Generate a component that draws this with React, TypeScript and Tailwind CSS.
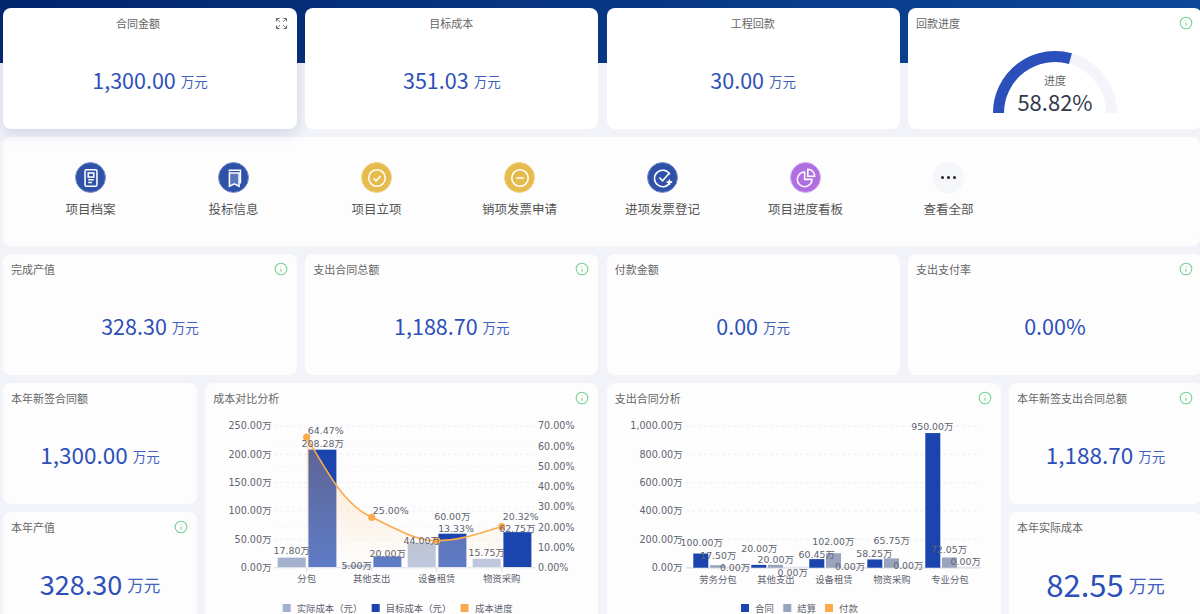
import React from "react";
import { Info } from "lucide-react";

const chartFont = "'DejaVu Sans','Noto Sans CJK SC',sans-serif";

function InfoIcon() {
  return <Info size={14} strokeWidth={1.8} className="text-[#74d091]" />;
}

function FullIcon() {
  return (
    <svg width="11" height="11" viewBox="0 0 11 11" fill="none" stroke="#666" strokeWidth="1">
      <path d="M0.5 3.5V0.5H3.5M7.5 0.5H10.5V3.5M10.5 7.5V10.5H7.5M3.5 10.5H0.5V7.5" />
      <path d="M1 1L4 4M10 1L7 4M10 10L7 7M1 10L4 7" strokeWidth="0.8" />
    </svg>
  );
}

interface StatProps {
  title: string;
  value: string;
  unit?: string;
  info?: boolean;
  center?: boolean;
  numClass?: string;
  unitClass?: string;
  extra?: React.ReactNode;
  titleClass?: string;
  white?: boolean;
  className?: string;
}

function StatCard({
  title,
  value,
  unit = "万元",
  info,
  center,
  numClass = "text-[21.5px]",
  unitClass = "text-[13.5px]",
  extra,
  titleClass = "",
  white,
  className = "",
}: StatProps) {
  return (
    <div className={`rounded-[8px] h-[121px] ${white ? "bg-white" : "bg-[#fdfdfe]"} ${className}`}>
      <div className={`h-[30px] pl-[8px] pr-[9px] flex items-center text-[11px] text-[#666] ${center ? "justify-center relative" : "justify-between"}`}>
        <span className={titleClass}>{title}</span>
        {info && <InfoIcon />}
        {extra}
      </div>
      <div className="h-[84px] flex items-center justify-center text-[#2d4fb8]">
        <span className={numClass}>{value}</span>
        {unit && <span className={`${unitClass} ml-[5px] mt-[3px] text-[#4262bd]`}>{unit}</span>}
      </div>
    </div>
  );
}

function Gauge() {
  const cx = 65;
  const cy = 75;
  const r = 56.5;
  const a = Math.PI * (1 - 0.5882);
  const ex = cx + r * Math.cos(a);
  const ey = cy - r * Math.sin(a);
  return (
    <div className="rounded-[8px] h-[121px] bg-white">
      <div className="h-[30px] pl-[8px] pr-[9px] flex items-center justify-between text-[11px] text-[#666]">
        <span>回款进度</span>
        <InfoIcon />
      </div>
      <svg width="130" height="84" viewBox="0 0 130 84" className="mx-auto">
        <path d={`M${cx - r} ${cy}A${r} ${r} 0 0 1 ${cx + r} ${cy}`} fill="none" stroke="#f3f5fb" strokeWidth="11" />
        <path d={`M${cx - r} ${cy}A${r} ${r} 0 0 1 ${ex} ${ey}`} fill="none" stroke="#2b50bc" strokeWidth="11" />
        <text x={cx} y="47" textAnchor="middle" fontSize="11" fill="#666">进度</text>
        <text x={cx} y="73" textAnchor="middle" fontSize="22" fill="#333a4d">58.82%</text>
      </svg>
    </div>
  );
}

const shortcuts = [
  {
    label: "项目档案",
    bg: "bg-[#2f52a8] border-[#7f94c9]",
    icon: (
      <>
        <rect x="5.5" y="3" width="13" height="18" rx="1.5" />
        <rect x="9" y="6.5" width="6" height="4.5" />
        <path d="M9 14h6M9 17h4" />
      </>
    ),
  },
  {
    label: "投标信息",
    bg: "bg-[#2f52a8] border-[#7f94c9]",
    icon: (
      <>
        <path d="M7 20V6.5h10.5V21l-5.2-2.7L7 21z" fill="#5a77bd" />
        <path d="M7 5V3.5h12V18" />
      </>
    ),
  },
  {
    label: "项目立项",
    bg: "bg-[#e6bb4d] border-[#f0d48c]",
    icon: (
      <>
        <circle cx="12" cy="12" r="9" />
        <path d="M8 12.3l3 2.8 5-5.3" />
      </>
    ),
  },
  {
    label: "销项发票申请",
    bg: "bg-[#e6bb4d] border-[#f0d48c]",
    icon: (
      <>
        <circle cx="12" cy="12" r="9" />
        <path d="M8 12h8" />
      </>
    ),
  },
  {
    label: "进项发票登记",
    bg: "bg-[#2f52a8] border-[#7f94c9]",
    icon: (
      <>
        <path d="M19.5 8A9 9 0 1 0 20 16" />
        <path d="M8 11.5l3.5 3.5L19 6.5M16 16.5h6M19 13.5v6" />
      </>
    ),
  },
  {
    label: "项目进度看板",
    bg: "bg-[#b06fe0] border-[#d2aaf0]",
    icon: (
      <>
        <path d="M10.5 5.5a8 8 0 1 0 8 8h-8z" />
        <path d="M14 2.5a7.5 7.5 0 0 1 7.5 7.5H14z" />
      </>
    ),
  },
];

function Shortcut({ label, bg, children }: { label: string; bg: string; children: React.ReactNode }) {
  return (
    <div className="w-[143px] flex flex-col items-center">
      <div className={`w-[31px] h-[31px] rounded-full border flex items-center justify-center ${bg}`}>
        <svg width="22" height="22" viewBox="0 0 24 24" fill="none" stroke="#fff" strokeWidth="1.7">
          {children}
        </svg>
      </div>
      <div className="mt-[7px] text-[12.5px] leading-[18px] text-[#555]">{label}</div>
    </div>
  );
}

function Label({ x, y, text, anchor = "middle", size = 9.4 }: { x: number; y: number; text: string; anchor?: "middle" | "start" | "end"; size?: number }) {
  return (
    <text x={x} y={y + 3.4} textAnchor={anchor} fontSize={size} fill="#5f636e" fontFamily={chartFont}>
      {text}
    </text>
  );
}

function Legend({ items }: { items: { x: number; tx: number; c: string; t: string }[] }) {
  return (
    <>
      {items.map((l) => (
        <g key={l.t}>
          <rect x={l.x} y="604" width="8" height="8" fill={l.c} />
          <text x={l.tx} y="611.5" fontSize="9.4" fill="#5f636e" fontFamily={chartFont}>{l.t}</text>
        </g>
      ))}
    </>
  );
}

function CostChart() {
  const base = 567.7;
  const h = (v: number) => (v / 250) * 141.7;
  const leftAxis = ["250.00万", "200.00万", "150.00万", "100.00万", "50.00万", "0.00万"];
  const rightAxis = ["70.00%", "60.00%", "50.00%", "40.00%", "30.00%", "20.00%", "10.00%", "0.00%"];
  const cats = [
    { c: 306.7, n: "分包", a: 17.8, t: 208.28 },
    { c: 371.7, n: "其他支出", a: 5, t: 20 },
    { c: 436.7, n: "设备租赁", a: 44, t: 60 },
    { c: 501.7, n: "物资采购", a: 15.75, t: 62.75 },
  ];
  const curve = "M306.7 437.2C330 477 345 505 371.7 517.3C395 528 415 540.7 436.7 540.7C460 540.7 480 533 501.7 526.6";
  const labels: [number, number, string][] = [
    [325.7, 430.7, "64.47%"],
    [322.7, 444, "208.28万"],
    [291.7, 550.7, "17.80万"],
    [356.7, 566, "5.00万"],
    [387.7, 553.3, "20.00万"],
    [390.7, 510.3, "25.00%"],
    [421.7, 540.7, "44.00万"],
    [452.3, 516.7, "60.00万"],
    [456, 528.7, "13.33%"],
    [486.7, 552.7, "15.75万"],
    [517.3, 529, "62.75万"],
    [520.7, 517, "20.32%"],
  ];
  return (
    <svg width="393" height="204" viewBox="205 410 393 204">
      <defs>
        <linearGradient id="costArea" x1="0" y1="0" x2="0" y2="1">
          <stop offset="0" stopColor="#f9a94a" stopOpacity="0.3" />
          <stop offset="1" stopColor="#ffffff" stopOpacity="0.3" />
        </linearGradient>
      </defs>
      {[426, 454.3, 482.7, 511, 539.3].map((y) => (
        <line key={y} x1="274" x2="535" y1={y} y2={y} stroke="#eceef3" strokeWidth="1" strokeDasharray="3 3" />
      ))}
      {[446.2, 466.5, 486.7, 507, 527.2, 547.4].map((y) => (
        <line key={y} x1="274" x2="535" y1={y} y2={y} stroke="#f4f5f8" strokeWidth="1" strokeDasharray="3 3" />
      ))}
      {leftAxis.map((t, i) => (
        <Label key={t} x={271.6} y={426 + i * 28.34} text={t} anchor="end" size={9.6} />
      ))}
      {rightAxis.map((t, i) => (
        <Label key={t} x={538} y={426 + i * 20.24} text={t} anchor="start" size={9.6} />
      ))}
      {cats.map((d) => (
        <g key={d.n}>
          <rect x={d.c - 29} y={base - h(d.a)} width="28" height={h(d.a)} fill="#a3b1cf" />
          <rect x={d.c + 1.7} y={base - h(d.t)} width="28" height={h(d.t)} fill="#1a44ae" />
          <line x1={d.c} x2={d.c} y1={base} y2={base + 4} stroke="#d5d7de" />
          <Label x={d.c} y={579} text={d.n} />
        </g>
      ))}
      <line x1="274" x2="535" y1={base} y2={base} stroke="#dfe1e8" strokeWidth="1.2" />
      <path d={`${curve}L501.7 ${base}L306.7 ${base}Z`} fill="url(#costArea)" />
      <path d={curve} fill="none" stroke="#fbab4e" strokeWidth="1.6" />
      {[
        [306.7, 437.2],
        [371.7, 517.3],
        [436.7, 540.7],
        [501.7, 526.6],
      ].map(([x, y]) => (
        <circle key={x} cx={x} cy={y} r="3.6" fill="#fbab4e" />
      ))}
      {labels.map(([x, y, t]) => (
        <Label key={t} x={x} y={y} text={t} />
      ))}
      <Legend
        items={[
          { x: 282.7, tx: 296.7, c: "#a3b1cf", t: "实际成本（元）" },
          { x: 371.7, tx: 385.7, c: "#1a44ae", t: "目标成本（元）" },
          { x: 460.5, tx: 475, c: "#fbab4e", t: "成本进度" },
        ]}
      />
    </svg>
  );
}

function ContractChart() {
  const base = 567.7;
  const h = (v: number) => v * 0.1417;
  const axis = ["1,000.00万", "800.00万", "600.00万", "400.00万", "200.00万", "0.00万"];
  const cats = [
    { c: 718, n: "劳务分包", a: 100, b: 17.5 },
    { c: 776, n: "其他支出", a: 20, b: 20 },
    { c: 834, n: "设备租赁", a: 60.45, b: 102 },
    { c: 892, n: "物资采购", a: 58.25, b: 65.75 },
    { c: 950, n: "专业分包", a: 950, b: 72.05 },
  ];
  const labels: [number, number, string][] = [
    [701.7, 543, "100.00万"],
    [718.3, 556, "17.50万"],
    [735, 568, "0.00万"],
    [759.3, 548.3, "20.00万"],
    [775.7, 560, "20.00万"],
    [792.7, 573, "0.00万"],
    [816.7, 554.3, "60.45万"],
    [833.3, 541.7, "102.00万"],
    [850, 566.7, "0.00万"],
    [874.3, 553.7, "58.25万"],
    [891.7, 541, "65.75万"],
    [908.3, 566, "0.00万"],
    [932.3, 427, "950.00万"],
    [949, 549.7, "72.05万"],
    [965.7, 561.7, "0.00万"],
  ];
  return (
    <svg width="394" height="204" viewBox="607 410 394 204">
      {[426, 454.3, 482.7, 511, 539.3].map((y) => (
        <line key={y} x1="686" x2="981" y1={y} y2={y} stroke="#eceef3" strokeWidth="1" strokeDasharray="3 3" />
      ))}
      {axis.map((t, i) => (
        <Label key={t} x={682.7} y={426 + i * 28.34} text={t} anchor="end" size={9.6} />
      ))}
      <line x1="686" x2="981" y1={base} y2={base} stroke="#e3e5ea" strokeWidth="2" />
      {cats.map((d) => (
        <g key={d.n}>
          <rect x={d.c - 24.7} y={base - h(d.a)} width="15" height={h(d.a)} fill="#1a44ae" />
          <rect x={d.c - 8} y={base - h(d.b)} width="15" height={h(d.b)} fill="#9aa3bd" />
          <Label x={d.c} y={579.5} text={d.n} />
        </g>
      ))}
      {labels.map(([x, y, t]) => (
        <Label key={`${x}${t}`} x={x} y={y} text={t} />
      ))}
      <Legend
        items={[
          { x: 741, tx: 755, c: "#1a44ae", t: "合同" },
          { x: 783.3, tx: 797.3, c: "#9aa3bd", t: "结算" },
          { x: 825, tx: 839, c: "#fbab4e", t: "付款" },
        ]}
      />
    </svg>
  );
}

function ChartCard({ title, children }: { title: string; children: React.ReactNode }) {
  return (
    <div className="rounded-[8px] bg-[#fdfdfe] h-[250px]">
      <div className="h-[27px] pt-[3px] pl-[8px] pr-[9px] flex items-center justify-between text-[11px] text-[#666]">
        <span>{title}</span>
        <InfoIcon />
      </div>
      {children}
    </div>
  );
}

export default function App() {
  return (
    <div
      className="h-[614px] w-[1200px] overflow-hidden pl-[3px] pt-[8px] bg-[#f1f3f9] bg-[linear-gradient(90deg,#02266e,#0d4798)] bg-no-repeat bg-[length:100%_63px]"
      style={{ fontFamily: "'Noto Sans CJK SC','Noto Sans',sans-serif" }}
    >
      <div className="grid grid-cols-[294px_293px_293px_294px] gap-x-[8.33px]">
        <StatCard
          title="合同金额"
          value="1,300.00"
          center
          white
          titleClass="mr-[23px]"
          className="shadow-[0_4px_14px_rgba(60,60,120,0.18)]"
          extra={
            <span className="absolute right-[10px] top-[10px]"><FullIcon /></span>
          }
        />
        <StatCard title="目标成本" value="351.03" center white />
        <StatCard title="工程回款" value="30.00" center white />
        <Gauge />
      </div>

      <div className="mt-[8px] h-[109px] rounded-[8px] bg-[#fdfdfe] pt-[25px] pl-[16px] flex">
        {shortcuts.map((s) => (
          <Shortcut key={s.label} label={s.label} bg={s.bg}>
            {s.icon}
          </Shortcut>
        ))}
        <div className="w-[143px] flex flex-col items-center">
          <div className="w-[31px] h-[31px] rounded-full bg-[#f5f6f9] flex items-center justify-center gap-[3px]">
            <span className="w-[3px] h-[3px] rounded-full bg-[#222]" />
            <span className="w-[3px] h-[3px] rounded-full bg-[#222]" />
            <span className="w-[3px] h-[3px] rounded-full bg-[#222]" />
          </div>
          <div className="mt-[7px] text-[12.5px] leading-[18px] text-[#555]">查看全部</div>
        </div>
      </div>

      <div className="mt-[8px] grid grid-cols-[294px_293px_293px_294px] gap-x-[8.33px]">
        <StatCard title="完成产值" value="328.30" info />
        <StatCard title="支出合同总额" value="1,188.70" info />
        <StatCard title="付款金额" value="0.00" />
        <StatCard title="支出支付率" value="0.00%" unit="" info />
      </div>

      <div className="mt-[8px] grid grid-cols-[194px_393px_394px_193px] gap-x-[8.33px]">
        <div className="flex flex-col gap-[8px]">
          <StatCard title="本年新签合同额" value="1,300.00" numClass="text-[22.5px]" />
          <StatCard title="本年产值" value="328.30" info numClass="text-[27px]" unitClass="text-[16.5px]" />
        </div>
        <ChartCard title="成本对比分析">
          <CostChart />
        </ChartCard>
        <ChartCard title="支出合同分析">
          <ContractChart />
        </ChartCard>
        <div className="flex flex-col gap-[8px]">
          <StatCard title="本年新签支出合同总额" value="1,188.70" info numClass="text-[22.5px]" />
          <StatCard title="本年实际成本" value="82.55" numClass="text-[31px]" unitClass="text-[18px]" />
        </div>
      </div>
    </div>
  );
}
